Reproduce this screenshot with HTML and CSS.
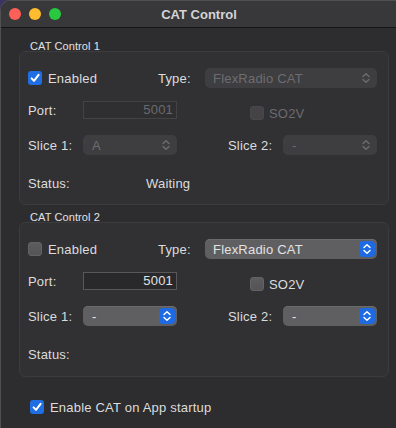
FILE: index.html
```html
<!DOCTYPE html>
<html>
<head>
<meta charset="utf-8">
<link rel="stylesheet" href="styles.css">
</head>
<body>
<div class="window">
  <div class="titlebar">
    <div class="lights">
      <span class="light red"></span>
      <span class="light yellow"></span>
      <span class="light green"></span>
    </div>
    <div class="title">CAT Control</div>
    <div></div>
  </div>
  <div class="main">
    <div class="group-label">CAT Control 1</div>
    <div class="box">
      <div class="row r1">
        <div class="check-group">
          <span class="cb checked"><svg viewBox="0 0 14 14" width="14" height="14"><path d="M3.6 7.4 L6 9.9 L10.6 3.9" fill="none" stroke="#fff" stroke-width="2" stroke-linecap="round" stroke-linejoin="round"/></svg></span>
          <span class="lbl">Enabled</span>
        </div>
        <div class="type-lbl">Type:</div>
        <div class="popup wide disabled"><span>FlexRadio CAT</span><svg class="chev" viewBox="0 0 16 16" width="16" height="16"><path d="M5 6.5 L8 3.8 L11 6.5 M5 9.5 L8 12.2 L11 9.5" fill="none" stroke="#6d6d70" stroke-width="1.4" stroke-linecap="round" stroke-linejoin="round"/></svg></div>
      </div>
      <div class="row r2">
        <div class="field-lbl">Port:</div>
        <div class="field disabled">5001</div>
        <div class="so2v">
          <span class="cb off disabled"></span>
          <span class="lbl dim">SO2V</span>
        </div>
      </div>
      <div class="row r3">
        <div class="field-lbl">Slice 1:</div>
        <div class="popup narrow disabled"><span>A</span><svg class="chev" viewBox="0 0 16 16" width="16" height="16"><path d="M5 6.5 L8 3.8 L11 6.5 M5 9.5 L8 12.2 L11 9.5" fill="none" stroke="#6d6d70" stroke-width="1.4" stroke-linecap="round" stroke-linejoin="round"/></svg></div>
        <div class="slice2-lbl">Slice 2:</div>
        <div class="popup narrow disabled"><span>-</span><svg class="chev" viewBox="0 0 16 16" width="16" height="16"><path d="M5 6.5 L8 3.8 L11 6.5 M5 9.5 L8 12.2 L11 9.5" fill="none" stroke="#6d6d70" stroke-width="1.4" stroke-linecap="round" stroke-linejoin="round"/></svg></div>
      </div>
      <div class="row r4">
        <div class="status-lbl">Status:</div>
        <div class="status-val">Waiting</div>
      </div>
    </div>

    <div class="group-label g2">CAT Control 2</div>
    <div class="box box2">
      <div class="row r1">
        <div class="check-group">
          <span class="cb off"></span>
          <span class="lbl">Enabled</span>
        </div>
        <div class="type-lbl">Type:</div>
        <div class="popup wide"><span>FlexRadio CAT</span><span class="stepper"><svg viewBox="0 0 16 16" width="16" height="16"><path d="M5 6.5 L8 3.8 L11 6.5 M5 9.5 L8 12.2 L11 9.5" fill="none" stroke="#fff" stroke-width="1.5" stroke-linecap="round" stroke-linejoin="round"/></svg></span></div>
      </div>
      <div class="row r2">
        <div class="field-lbl">Port:</div>
        <div class="field">5001</div>
        <div class="so2v">
          <span class="cb off"></span>
          <span class="lbl">SO2V</span>
        </div>
      </div>
      <div class="row r3">
        <div class="field-lbl">Slice 1:</div>
        <div class="popup narrow"><span>-</span><span class="stepper"><svg viewBox="0 0 16 16" width="16" height="16"><path d="M5 6.5 L8 3.8 L11 6.5 M5 9.5 L8 12.2 L11 9.5" fill="none" stroke="#fff" stroke-width="1.5" stroke-linecap="round" stroke-linejoin="round"/></svg></span></div>
        <div class="slice2-lbl">Slice 2:</div>
        <div class="popup narrow"><span>-</span><span class="stepper"><svg viewBox="0 0 16 16" width="16" height="16"><path d="M5 6.5 L8 3.8 L11 6.5 M5 9.5 L8 12.2 L11 9.5" fill="none" stroke="#fff" stroke-width="1.5" stroke-linecap="round" stroke-linejoin="round"/></svg></span></div>
      </div>
      <div class="row r4">
        <div class="status-lbl">Status:</div>
        <div class="status-val"></div>
      </div>
    </div>

    <div class="row startup">
      <span class="cb checked"><svg viewBox="0 0 14 14" width="14" height="14"><path d="M3.6 7.4 L6 9.9 L10.6 3.9" fill="none" stroke="#fff" stroke-width="2" stroke-linecap="round" stroke-linejoin="round"/></svg></span>
      <span class="lbl">Enable CAT on App startup</span>
    </div>
  </div>
</div>
</body>
</html>
```

FILE: styles.css
```css
html {
  background: #3b3460;
}
body {
  margin: 0;
  width: 396px;
  height: 428px;
  overflow: hidden;
  font-family: "Liberation Sans", Arial, sans-serif;
  color: #dcdcdd;
}
.window {
  box-sizing: border-box;
  height: 428px;
  background: #2d2d2f;
  border-left: 1px solid #505053;
  border-top: 1px solid #505053;
  border-top-left-radius: 10px;
  overflow: hidden;
}
.titlebar {
  height: 26px;
  background: #38383b;
  border-bottom: 1px solid #141414;
  display: grid;
  grid-template-columns: 1fr auto 1fr;
  align-items: center;
}
.lights {
  display: flex;
  gap: 8px;
  padding-left: 8px;
}
.light {
  width: 12px;
  height: 12px;
  border-radius: 50%;
  display: block;
}
.red { background: #fe5f57; }
.yellow { background: #febc2e; }
.green { background: #28c840; }
.title {
  font-size: 13px;
  font-weight: bold;
  color: #d4d4d5;
  padding-left: 1px;
}
.main {
  padding: 11px 7px 0 18px;
}
.group-label {
  font-size: 11px;
  line-height: 14px;
  height: 12px;
  padding-left: 11px;
  color: #e2e2e3;
  letter-spacing: 0.1px;
}
.g2 {
  margin-top: 5px;
}
.box {
  box-sizing: border-box;
  height: 154px;
  border: 1px solid #3c3c3f;
  border-radius: 6px;
  background: #313134;
  padding: 16px 11px 0 8px;
}
.box2 {
  height: 155px;
}
.row {
  display: flex;
  align-items: center;
  height: 20px;
  font-size: 13px;
  letter-spacing: 0.2px;
}
.r2 { margin-top: 12px; }
.r3 { margin-top: 15px; }
.r4 { margin-top: 18px; }
.check-group {
  width: 130px;
  display: flex;
  align-items: center;
  gap: 6px;
}
.cb {
  width: 14px;
  height: 14px;
  border-radius: 3px;
  box-sizing: border-box;
  display: block;
  flex: none;
}
.cb svg { display: block; }
.cb.checked {
  background: #1f6ee3;
}
.cb.off {
  background: linear-gradient(#5c5c5f, #545457);
  border: 1px solid #636366;
}
.cb.off.disabled {
  background: #444447;
  border-color: #48484b;
}
.lbl.dim {
  color: #6b6b6e;
}
.type-lbl {
  width: 47px;
}
.popup {
  box-sizing: border-box;
  height: 20px;
  border-radius: 5px;
  background: #5f5f62;
  box-shadow: inset 0 1px 0 #6a6a6d;
  display: flex;
  align-items: center;
  justify-content: space-between;
  padding: 0 2px 0 8px;
  color: #e2e2e3;
}
.popup.wide { width: 172px; }
.popup.narrow { width: 94px; padding-left: 9px; }
.popup.disabled {
  background: #3e3e41;
  box-shadow: none;
  color: #6d6d70;
  padding-right: 3px;
}
.stepper {
  width: 16px;
  height: 16px;
  border-radius: 4px;
  background: #1d6ae2;
  display: block;
}
.stepper svg, .chev { display: block; }
.field-lbl {
  width: 55px;
}
.field {
  box-sizing: border-box;
  width: 94px;
  height: 18px;
  border: 1px solid #58585b;
  background: #29292b;
  text-align: right;
  padding-right: 3px;
  line-height: 16px;
  color: #e2e2e3;
}
.field.disabled {
  border-color: #434346;
  background: #2f2f31;
  color: #6b6b6e;
}
.so2v {
  margin-left: 73px;
  margin-top: 6px;
  display: flex;
  align-items: center;
  gap: 5px;
}
.slice2-lbl {
  width: 55px;
  margin-left: 51px;
}
.status-lbl {
  width: 118px;
}
.startup {
  margin-top: 20px;
  padding-left: 11px;
  gap: 6px;
}
```
